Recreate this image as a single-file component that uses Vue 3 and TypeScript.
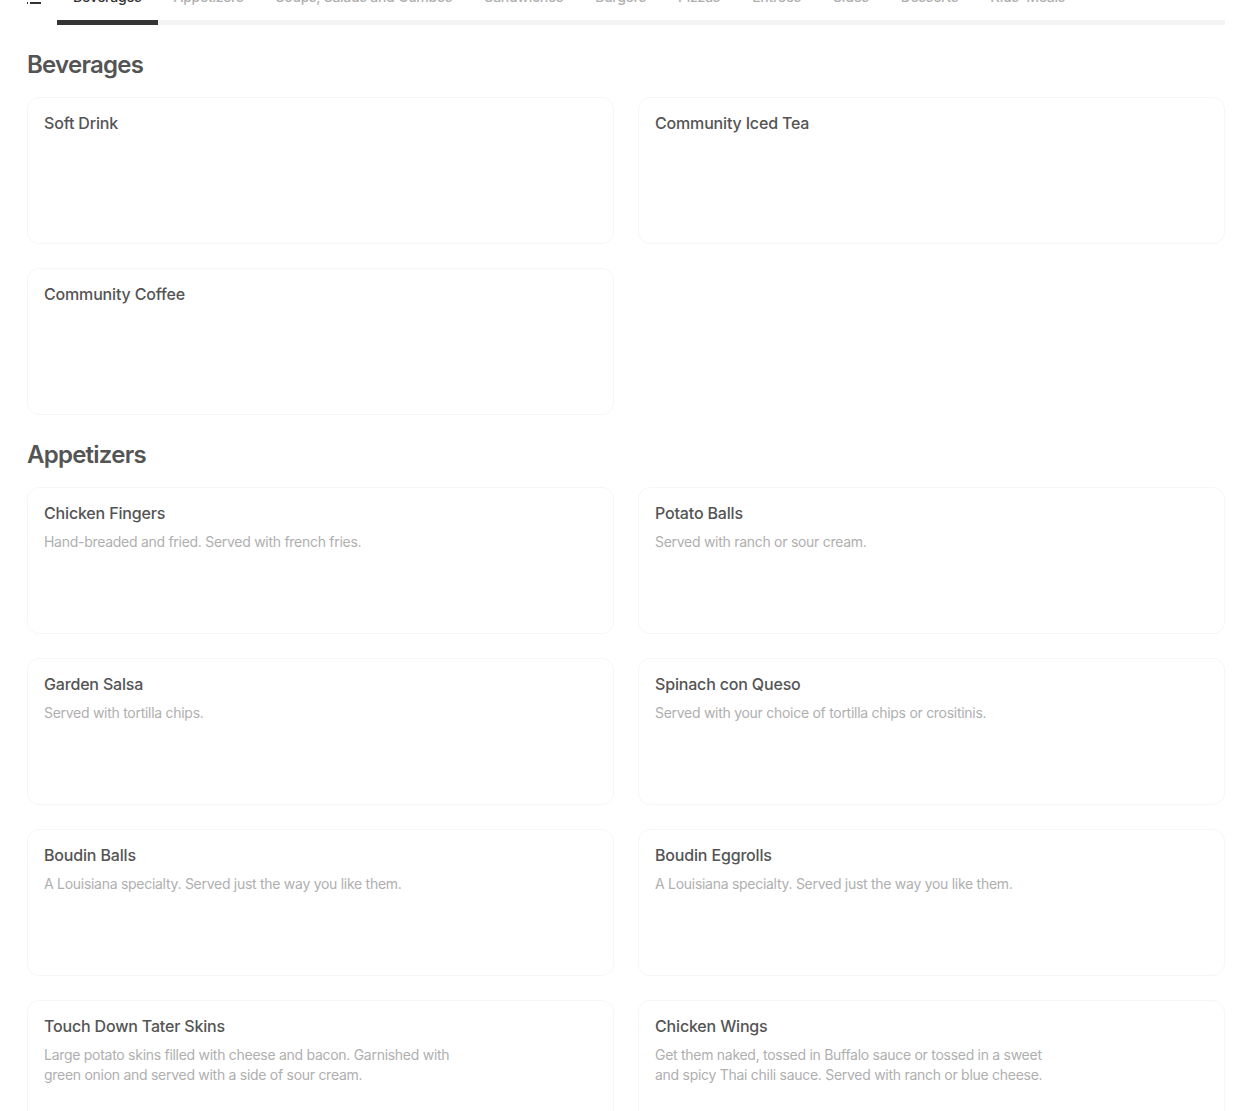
<template>
  <div class="page">
    <div class="nav">
      <button class="menu-btn" type="button" aria-label="Menu">
        <svg width="16" height="16" viewBox="0 0 16 16" aria-hidden="true">
          <rect x="0" y="1" width="3" height="2" fill="#333" />
          <rect x="5" y="1" width="11" height="2" fill="#333" />
          <rect x="0" y="7" width="3" height="2" fill="#333" />
          <rect x="5" y="7" width="11" height="2" fill="#333" />
          <rect x="0" y="13" width="3" height="2" fill="#333" />
          <rect x="5" y="13" width="11" height="2" fill="#333" />
        </svg>
      </button>
      <div class="tabs">
        <a v-for="(tab, i) in tabs" :key="tab" class="tab" :class="{ active: i === 0 }">{{ tab }}</a>
      </div>
    </div>

    <section v-for="section in sections" :key="section.title" class="section">
      <h2 class="section-title">{{ section.title }}</h2>
      <div class="grid">
        <div v-for="item in section.items" :key="item.name" class="card">
          <div class="card-name">{{ item.name }}</div>
          <div v-if="item.desc" class="card-desc">{{ item.desc }}</div>
        </div>
      </div>
    </section>
  </div>
</template>

<script setup lang="ts">
interface MenuItem {
  name: string
  desc?: string
}

interface MenuSection {
  title: string
  items: MenuItem[]
}

const tabs: string[] = [
  'Beverages',
  'Appetizers',
  'Soups, Salads and Gumbos',
  'Sandwiches',
  'Burgers',
  'Pizzas',
  'Entrees',
  'Sides',
  'Desserts',
  "Kids' Meals",
]

const sections: MenuSection[] = [
  {
    title: 'Beverages',
    items: [{ name: 'Soft Drink' }, { name: 'Community Iced Tea' }, { name: 'Community Coffee' }],
  },
  {
    title: 'Appetizers',
    items: [
      { name: 'Chicken Fingers', desc: 'Hand-breaded and fried. Served with french fries.' },
      { name: 'Potato Balls', desc: 'Served with ranch or sour cream.' },
      { name: 'Garden Salsa', desc: 'Served with tortilla chips.' },
      { name: 'Spinach con Queso', desc: 'Served with your choice of tortilla chips or crositinis.' },
      { name: 'Boudin Balls', desc: 'A Louisiana specialty. Served just the way you like them.' },
      { name: 'Boudin Eggrolls', desc: 'A Louisiana specialty. Served just the way you like them.' },
      {
        name: 'Touch Down Tater Skins',
        desc: 'Large potato skins filled with cheese and bacon. Garnished with green onion and served with a side of sour cream.',
      },
      {
        name: 'Chicken Wings',
        desc: 'Get them naked, tossed in Buffalo sauce or tossed in a sweet and spicy Thai chili sauce. Served with ranch or blue cheese.',
      },
    ],
  },
]
</script>

<style>
html,
body {
  overflow: hidden;
  background: #fff;
}
</style>

<style scoped>
.page {
  height: 1111px;
  overflow: hidden;
  padding: 0 25px 0 27px;
  font-family: Inter, "Noto Sans", sans-serif;
  color: #545454;
}

/* page is scrolled a little, the tab labels are cut by the top edge */
.nav {
  display: flex;
  height: 25px;
}

.menu-btn {
  flex: 0 0 30px;
  height: 25px;
  padding: 0;
  border: 0;
  background: none;
  overflow: hidden;
  display: flex;
  align-items: flex-start;
}

.menu-btn svg {
  margin-top: -11px;
  margin-left: -2px;
}

.tabs {
  flex: 1;
  display: flex;
  height: 25px;
  box-shadow: inset 0 -5px 0 #f4f4f4;
}

.tab {
  box-sizing: border-box;
  height: 40px;
  margin-top: -15px;
  padding: 0 16px;
  line-height: 23px;
  font-size: 14px;
  font-weight: 500;
  letter-spacing: -0.26px;
  color: #afafaf;
  white-space: nowrap;
}

.tab.active {
  color: #333;
  border-bottom: 5px solid #333;
}

.section {
  margin-top: 24px;
}

.section-title {
  margin: 0 0 16px;
  font-size: 24px;
  line-height: 32px;
  font-weight: 600;
  letter-spacing: -0.75px;
  color: #545454;
}

.grid {
  display: grid;
  grid-template-columns: 1fr 1fr;
  column-gap: 24px;
  row-gap: 24px;
}

.card {
  height: 147px;
  box-sizing: border-box;
  padding: 15px 16px 0;
  border: 1px solid #f6f6f6;
  border-radius: 12px;
}

.card-name {
  font-size: 16px;
  line-height: 20px;
  font-weight: 500;
  letter-spacing: -0.17px;
  color: #545454;
}

.card-desc {
  margin-top: 9px;
  max-width: 412px;
  font-size: 14px;
  line-height: 20px;
  letter-spacing: -0.28px;
  color: #afafaf;
}
</style>
